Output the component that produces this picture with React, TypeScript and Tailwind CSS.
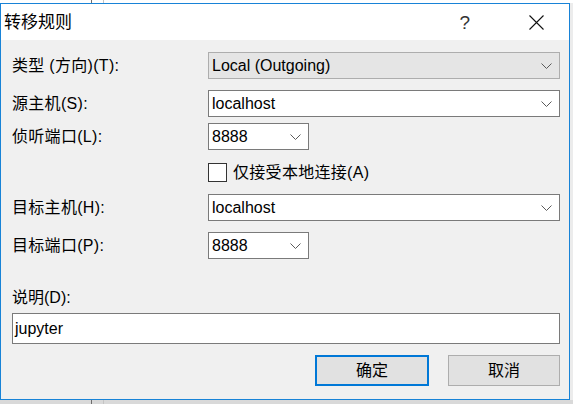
import clsx from "clsx";

const font = "font-['Liberation_Sans','Noto_Sans_CJK_SC',sans-serif]";

const Chevron = () => (
  <svg width="11" height="6" viewBox="0 0 11 6" className="shrink-0">
    <polyline points="0.5,0.5 5.5,5.5 10.5,0.5" fill="none" stroke="#5a5a5a" strokeWidth="1" />
  </svg>
);

interface ComboProps {
  value: string;
  disabled?: boolean;
  narrow?: boolean;
}

const Combo = ({ value, disabled, narrow }: ComboProps) => (
  <div
    className={clsx(
      "flex h-[27px] items-center border pl-[3px] pr-[7px]",
      disabled ? "border-[#adadad] bg-[#e5e5e5]" : "border-[#7a7a7a] bg-white",
      narrow ? "w-[101px]" : "flex-1"
    )}
  >
    <span className="flex-1 text-[16px] leading-none text-black">{value}</span>
    <Chevron />
  </div>
);

const Row = ({ label, children, className }: { label: string; children: React.ReactNode; className?: string }) => (
  <div className={clsx("flex h-[27px] items-center", className)}>
    <span className="w-[196px] shrink-0 text-[16px] leading-none tracking-[0.3px] text-black">{label}</span>
    {children}
  </div>
);

// little strip of the desktop showing round the dialog
const Strip = ({ className }: { className: string }) => (
  <div className={clsx("flex w-full", className)}>
    <div className="w-[91px]" />
    <div className="w-px bg-[#6e6e6e]" />
    <div className="w-[11px]" />
    <div className="w-px bg-[#c4c4c4]" />
  </div>
);

export default function App() {
  return (
    <div className={clsx("flex h-[404px] w-[573px] flex-col overflow-hidden bg-[#f0f0f0]", font)}>
      <Strip className="h-[3px] bg-white" />

      <div className="flex">
        {/* dialog window */}
        <div className="flex h-[397px] w-[570px] flex-col border border-[#1883d7] bg-[#f0f0f0]">
          {/* title bar */}
          <div className="flex h-[36px] shrink-0 items-center bg-white pl-[3px] pr-[25px]">
            <span className="text-[17px] leading-none text-black">转移规则</span>
            <span className="ml-auto text-[19px] font-light leading-none text-[#333]">?</span>
            <svg width="15" height="15" viewBox="0 0 15 15" className="ml-[59px]">
              <path d="M0.5 0.5 L14.5 14.5 M14.5 0.5 L0.5 14.5" stroke="#111" strokeWidth="1.1" fill="none" />
            </svg>
          </div>

          {/* form */}
          <div className="flex flex-col pl-[11px] pr-[9px]">
            <Row label="类型 (方向)(T):" className="mt-[12px]">
              <Combo value="Local (Outgoing)" disabled />
            </Row>
            <Row label="源主机(S):" className="mt-[11px]">
              <Combo value="localhost" />
            </Row>
            <Row label="侦听端口(L):" className="mt-[6px]">
              <Combo value="8888" narrow />
            </Row>

            <div className="ml-[196px] mt-[13px] flex h-[19px] items-center">
              <div className="h-[19px] w-[19px] border border-[#333] bg-white" />
              <span className="ml-[6px] text-[16px] leading-none tracking-[0.3px] text-black">仅接受本地连接(A)</span>
            </div>

            <Row label="目标主机(H):" className="mt-[12px]">
              <Combo value="localhost" />
            </Row>
            <Row label="目标端口(P):" className="mt-[11px]">
              <Combo value="8888" narrow />
            </Row>

            <span className="mt-[29px] h-[20px] text-[16px] leading-[20px] text-black">说明(D):</span>
            <div className="mt-[5px] flex h-[31px] items-center border border-[#7a7a7a] bg-white pl-[2px]">
              <span className="text-[16px] leading-none text-black">jupyter</span>
            </div>

            <div className="mt-[11px] flex justify-end gap-[19px]">
              <button className="flex h-[31px] w-[114px] items-center justify-center border-2 border-[#0078d7] bg-[#e1e1e1] text-[16px] text-black">
                确定
              </button>
              <button className="flex h-[31px] w-[112px] items-center justify-center border border-[#adadad] bg-[#e1e1e1] text-[16px] text-black">
                取消
              </button>
            </div>
          </div>
        </div>
        <div className="flex-1 bg-[#ececec]" />
      </div>

      <Strip className="h-[4px] bg-[#d9d9d9]" />
    </div>
  );
}
